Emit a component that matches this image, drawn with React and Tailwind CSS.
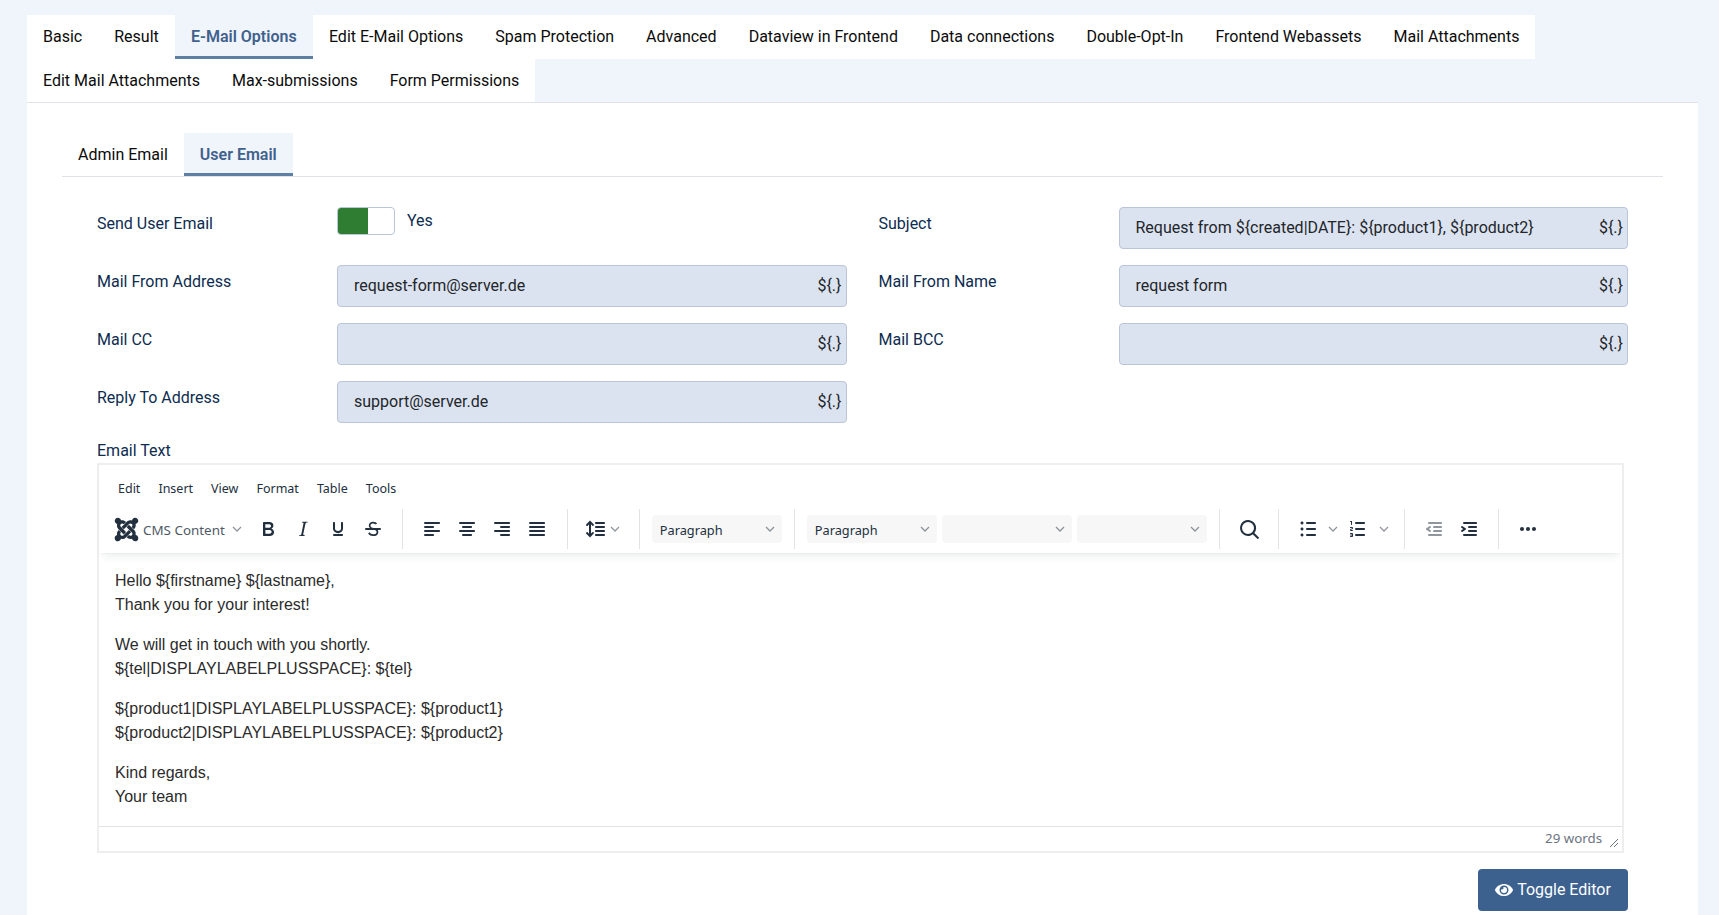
import React from "react";
import { FaJoomla, FaEye } from "react-icons/fa";

const topTabs = [
    "Basic",
    "Result",
    "E-Mail Options",
    "Edit E-Mail Options",
    "Spam Protection",
    "Advanced",
    "Dataview in Frontend",
    "Data connections",
    "Double-Opt-In",
    "Frontend Webassets",
    "Mail Attachments",
    "Edit Mail Attachments",
    "Max-submissions",
    "Form Permissions",
];

const fields = [
    { label: "Mail From Address", value: "request-form@server.de" },
    { label: "Mail From Name", value: "request form" },
    { label: "Mail CC", value: "" },
    { label: "Mail BCC", value: "" },
    { label: "Reply To Address", value: "support@server.de" },
];

const menuItems = ["Edit", "Insert", "View", "Format", "Table", "Tools"];

const ico = {
    bold: "M7.8 19c-.3 0-.5 0-.6-.2l-.2-.5V5.7c0-.2 0-.4.2-.5l.6-.2h5c1.5 0 2.7.3 3.5 1 .7.6 1.1 1.4 1.1 2.5a3 3 0 0 1-.6 1.9c-.4.6-1 1-1.6 1.2.4.1.9.3 1.3.6s.8.7 1 1.2c.4.4.5 1 .5 1.6 0 1.3-.4 2.3-1.3 3-.8.7-2.1 1-3.8 1H7.8zm5-8.3c.6 0 1.2-.1 1.6-.5.4-.3.6-.7.6-1.3 0-1.1-.8-1.7-2.4-1.7H9.3v3.5h3.4zm.5 6c.7 0 1.3-.1 1.7-.4.4-.4.6-.9.6-1.5s-.2-1-.7-1.4c-.4-.3-1-.4-2-.4H9.4v3.8h4z",
    italic: "M16.7 4.7l-.1.9h-.3c-.6 0-1 0-1.4.3-.3.3-.4.6-.5 1.1l-2.1 9.8v.6c0 .5.4.8 1.4.8h.2l-.2.8H8l.2-.8h.2c1.1 0 1.8-.5 2-1.5l2-9.8.1-.5c0-.6-.4-.8-1.4-.8h-.3l.2-.9h5.8z",
    underline: "M16 5c.6 0 1 .4 1 1v5.5a4 4 0 0 1-.4 1.8l-1 1.4a5.3 5.3 0 0 1-5.5 1 5 5 0 0 1-1.6-1c-.5-.4-.8-.9-1.1-1.4a4 4 0 0 1-.4-1.8V6c0-.6.4-1 1-1s1 .4 1 1v5.5c0 .3 0 .6.2 1l.6.7a3.3 3.3 0 0 0 2.2.8 3.4 3.4 0 0 0 2.2-.8c.3-.2.4-.5.6-.8l.2-.9V6c0-.6.4-1 1-1zM8 17h8c.6 0 1 .4 1 1s-.4 1-1 1H8a1 1 0 0 1 0-2z",
    strike: "M15.6 8.5c-.5-.7-1-1.1-1.3-1.3-.6-.4-1.3-.6-2-.6-2.7 0-2.8 1.7-2.8 2.1 0 1.6 1.8 2 3.2 2.3 4.4.9 4.6 2.8 4.6 3.9 0 1.4-.7 4.1-5 4.1A6.2 6.2 0 0 1 7 16.4l1.5-1.1c.4.6 1.6 2 3.7 2 1.6 0 2.5-.4 3-1 .3-.4.4-.9.4-1.3 0-.8-.4-2-4-2.8-3.6-.8-3.8-3-3.8-3.4 0-.8.3-1.9 1-2.7a4.7 4.7 0 0 1 3.4-1.3c1.8 0 3 .8 3.9 1.8l-1.5 1zM5 11h14a1 1 0 0 1 0 2H5a1 1 0 0 1 0-2z",
    alignLeft: "M5 5h14c.6 0 1 .4 1 1s-.4 1-1 1H5a1 1 0 1 1 0-2zm0 4h8c.6 0 1 .4 1 1s-.4 1-1 1H5a1 1 0 1 1 0-2zm0 8h8c.6 0 1 .4 1 1s-.4 1-1 1H5a1 1 0 0 1 0-2zm0-4h14c.6 0 1 .4 1 1s-.4 1-1 1H5a1 1 0 0 1 0-2z",
    alignCenter: "M5 5h14c.6 0 1 .4 1 1s-.4 1-1 1H5a1 1 0 1 1 0-2zm3 4h8c.6 0 1 .4 1 1s-.4 1-1 1H8a1 1 0 1 1 0-2zm0 8h8c.6 0 1 .4 1 1s-.4 1-1 1H8a1 1 0 0 1 0-2zm-3-4h14c.6 0 1 .4 1 1s-.4 1-1 1H5a1 1 0 0 1 0-2z",
    alignRight: "M5 5h14c.6 0 1 .4 1 1s-.4 1-1 1H5a1 1 0 1 1 0-2zm6 4h8c.6 0 1 .4 1 1s-.4 1-1 1h-8a1 1 0 0 1 0-2zm0 8h8c.6 0 1 .4 1 1s-.4 1-1 1h-8a1 1 0 0 1 0-2zm-6-4h14c.6 0 1 .4 1 1s-.4 1-1 1H5a1 1 0 0 1 0-2z",
    justify: "M5 5h14c.6 0 1 .4 1 1s-.4 1-1 1H5a1 1 0 1 1 0-2zm0 4h14c.6 0 1 .4 1 1s-.4 1-1 1H5a1 1 0 1 1 0-2zm0 4h14c.6 0 1 .4 1 1s-.4 1-1 1H5a1 1 0 0 1 0-2zm0 4h14c.6 0 1 .4 1 1s-.4 1-1 1H5a1 1 0 0 1 0-2z",
    lineHeight: "M21 5a1 1 0 0 1 .1 2H13a1 1 0 0 1-.1-2H21zm0 4a1 1 0 0 1 .1 2H13a1 1 0 0 1-.1-2H21zm0 4a1 1 0 0 1 .1 2H13a1 1 0 0 1-.1-2H21zm0 4a1 1 0 0 1 .1 2H13a1 1 0 0 1-.1-2H21zM7 3.6l3.7 3.7a1 1 0 0 1-1.3 1.5h-.1L8 7.3v9.2l1.3-1.3a1 1 0 0 1 1.3 0h.1c.4.4.4 1 0 1.3v.1L7 20.4l-3.7-3.7a1 1 0 0 1 1.3-1.5h.1L6 16.7V7.4L4.7 8.7a1 1 0 0 1-1.3 0h-.1a1 1 0 0 1 0-1.3v-.1L7 3.6z",
    search: "M16 17.3a8 8 0 1 1 1.4-1.4l4.3 4.4a1 1 0 0 1-1.4 1.4l-4.4-4.3zm-5-.3a6 6 0 1 0 0-12 6 6 0 0 0 0 12z",
    bullist: "M11 5h8c.6 0 1 .4 1 1s-.4 1-1 1h-8a1 1 0 0 1 0-2zm0 6h8c.6 0 1 .4 1 1s-.4 1-1 1h-8a1 1 0 0 1 0-2zm0 6h8c.6 0 1 .4 1 1s-.4 1-1 1h-8a1 1 0 0 1 0-2zM4.5 6c0-.4.1-.8.4-1 .3-.4.7-.5 1.1-.5.4 0 .8.1 1 .4.4.3.5.7.5 1.1 0 .4-.1.8-.4 1-.3.4-.7.5-1.1.5-.4 0-.8-.1-1-.4-.4-.3-.5-.7-.5-1.1zm0 6c0-.4.1-.8.4-1 .3-.4.7-.5 1.1-.5.4 0 .8.1 1 .4.4.3.5.7.5 1.1 0 .4-.1.8-.4 1-.3.4-.7.5-1.1.5-.4 0-.8-.1-1-.4-.4-.3-.5-.7-.5-1.1zm0 6c0-.4.1-.8.4-1 .3-.4.7-.5 1.1-.5.4 0 .8.1 1 .4.4.3.5.7.5 1.1 0 .4-.1.8-.4 1-.3.4-.7.5-1.1.5-.4 0-.8-.1-1-.4-.4-.3-.5-.7-.5-1.1z",
    numlist: "M10 17h8c.6 0 1 .4 1 1s-.4 1-1 1h-8a1 1 0 0 1 0-2zm0-6h8c.6 0 1 .4 1 1s-.4 1-1 1h-8a1 1 0 0 1 0-2zm0-6h8c.6 0 1 .4 1 1s-.4 1-1 1h-8a1 1 0 1 1 0-2zM6 4v3.5c0 .3-.2.5-.5.5a.5.5 0 0 1-.5-.5V5h-.5a.5.5 0 0 1 0-1H6zm-1 8.8l.2.2h1.3c.3 0 .5.2.5.5s-.2.5-.5.5H4.9a1 1 0 0 1-.9-1V13c0-.4.3-.8.6-1l1.2-.4.2-.3a.2.2 0 0 0-.2-.2H4.5a.5.5 0 0 1-.5-.5c0-.3.2-.5.5-.5h1.6c.5 0 .9.4.9 1v.1c0 .4-.3.8-.6 1l-1.2.4-.2.3zM7 17v2c0 .6-.4 1-1 1H4.5a.5.5 0 0 1 0-1h1.2c.2 0 .3-.1.3-.3 0-.2-.1-.3-.3-.3H4.4a.4.4 0 1 1 0-.8h1.3c.2 0 .3-.1.3-.3 0-.2-.1-.3-.3-.3H4.5a.5.5 0 1 1 0-1H6c.6 0 1 .4 1 1z",
    outdent: "M7 5h12c.6 0 1 .4 1 1s-.4 1-1 1H7a1 1 0 1 1 0-2zm5 4h7c.6 0 1 .4 1 1s-.4 1-1 1h-7a1 1 0 0 1 0-2zm0 4h7c.6 0 1 .4 1 1s-.4 1-1 1h-7a1 1 0 0 1 0-2zm-5 4h12a1 1 0 0 1 0 2H7a1 1 0 0 1 0-2zm1.6-3.8a1 1 0 0 1-1.2 1.6l-3-2a1 1 0 0 1 0-1.6l3-2a1 1 0 0 1 1.2 1.6L6.8 12l1.8 1.2z",
    indent: "M7 5h12c.6 0 1 .4 1 1s-.4 1-1 1H7a1 1 0 1 1 0-2zm5 4h7c.6 0 1 .4 1 1s-.4 1-1 1h-7a1 1 0 0 1 0-2zm0 4h7c.6 0 1 .4 1 1s-.4 1-1 1h-7a1 1 0 0 1 0-2zm-5 4h12a1 1 0 0 1 0 2H7a1 1 0 0 1 0-2zm-2.6-3.8L6.2 12l-1.8-1.2a1 1 0 0 1 1.2-1.6l3 2a1 1 0 0 1 0 1.6l-3 2a1 1 0 1 1-1.2-1.6z",
    more: "M6 10a2 2 0 0 0-2 2c0 1.1.9 2 2 2a2 2 0 0 0 2-2 2 2 0 0 0-2-2zm12 0a2 2 0 0 0-2 2c0 1.1.9 2 2 2a2 2 0 0 0 2-2 2 2 0 0 0-2-2zm-6 0a2 2 0 0 0-2 2c0 1.1.9 2 2 2a2 2 0 0 0 2-2 2 2 0 0 0-2-2z",
};

const Icon = ({ d, dim }) => (
    <svg width="24" height="24" viewBox="0 0 24 24" className={dim ? "fill-[#222f3e] opacity-50" : "fill-[#222f3e]"}>
        <path d={d} />
    </svg>
);

const Chevron = () => (
    <svg width="10" height="10" viewBox="0 0 10 10" className="fill-none stroke-[#222f3e] opacity-50">
        <path d="M1 3l4 4 4-4" strokeWidth="1.3" />
    </svg>
);

const Btn = ({ d, dim }) => (
    <div className="w-[35px] h-[28px] flex items-center justify-center">
        <Icon d={d} dim={dim} />
    </div>
);

const Sep = () => <div className="w-px h-[40px] bg-[#e3e3e3]" />;

const Select = ({ text, className }) => (
    <div className={`w-[130px] h-[28px] rounded bg-[#f7f7f7] pl-2 pr-[7px] flex items-center justify-between text-[12.75px] text-[#222f3e] ${className}`}>
        <span className="mt-[2px]">{text}</span>
        <Chevron />
    </div>
);

const Field = ({ label, value }) => (
    <div className="grid grid-cols-[240px_1fr]">
        <label className="pt-[5px] text-[#0d2c50]">{label}</label>
        <div className="h-[42px] rounded border border-[#b9c5d8] bg-[#dce3f0] pl-4 pr-1 flex items-center justify-between text-[#22262a]">
            <span>{value}</span>
            <span>{"${.}"}</span>
        </div>
    </div>
);

export default function App() {
    return (
        <div className="h-[915px] overflow-hidden bg-[#f0f4fb] pt-[15px] pl-[27px] pr-[21px] flex flex-col font-['Roboto',sans-serif] text-base leading-6">

            {/* Top tabs */}
            <div className="flex flex-wrap">
                {topTabs.map((tab) => (
                    <div
                        key={tab}
                        className={
                            tab === "E-Mail Options"
                                ? "h-[43.5px] px-[16.3px] pt-[10px] bg-[#f0f4fb] border-b-[3px] border-[#5f7ea3] text-[#3f618c] font-semibold"
                                : "h-[43.5px] px-4 pt-[10px] bg-white text-[#0b0b0b]"
                        }
                    >
                        {tab}
                    </div>
                ))}
            </div>

            <div className="flex-1 bg-white border-t border-[#dfe3e7] px-[35px] pt-[30px]">

                {/* Inner tabs */}
                <div className="flex border-b border-[#dfe3e7]">
                    <div className="h-[43px] px-4 pt-[10px] text-[#0b0b0b]">Admin Email</div>
                    <div className="h-[43px] px-4 pt-[10px] bg-[#f0f4fb] border-b-[3px] border-[#5f7ea3] text-[#3f618c] font-semibold">User Email</div>
                </div>

                <div className="pl-[35px] pr-[35px] pt-[30px]">
                    <div className="grid grid-cols-2 gap-x-[32px] gap-y-4">
                        <div className="grid grid-cols-[240px_1fr]">
                            <label className="pt-[5px] text-[#0d2c50]">Send User Email</label>
                            <div className="flex items-start gap-3">
                                <div className="w-[58px] h-[28px] rounded border border-[#b9c5d8] bg-white overflow-hidden">
                                    <div className="w-[30px] h-full bg-[#2f7d32]" />
                                </div>
                                <span className="text-[#0d2c50] leading-[28px]">Yes</span>
                            </div>
                        </div>
                        <Field label="Subject" value="Request from ${created|DATE}: ${product1}, ${product2}" />
                        {fields.map((f) => (
                            <Field key={f.label} label={f.label} value={f.value} />
                        ))}
                    </div>

                    <div className="mt-4 text-[#0d2c50]">Email Text</div>

                    {/* Editor */}
                    <div className="w-[1527px] h-[390px] border-2 border-[#eeeeee] flex flex-col font-['Noto_Sans',sans-serif]">
                        <div className="shadow-[0_2px_2px_-2px_rgba(34,47,62,0.1),0_8px_8px_-4px_rgba(34,47,62,0.07)] h-[88px] shrink-0">
                            <div className="flex h-[43px] pl-[19px] gap-[18px] items-center pt-[5px] text-[12.5px] text-[#222f3e]">
                                {menuItems.map((m) => (
                                    <span key={m}>{m}</span>
                                ))}
                            </div>
                            <div className="flex items-center h-[42px] pl-[14px]">
                                <FaJoomla className="w-[27px] h-[27px] text-[#222f3e]" />
                                <span className="ml-[3px] mt-[1px] text-[13.4px] text-[#222f3e] opacity-80">CMS Content</span>
                                <div className="ml-[7px] mr-[9px]"><Chevron /></div>
                                <Btn d={ico.bold} />
                                <Btn d={ico.italic} />
                                <Btn d={ico.underline} />
                                <Btn d={ico.strike} />
                                <div className="w-[11px]" />
                                <Sep />
                                <div className="w-[12px]" />
                                <Btn d={ico.alignLeft} />
                                <Btn d={ico.alignCenter} />
                                <Btn d={ico.alignRight} />
                                <Btn d={ico.justify} />
                                <div className="w-[12px]" />
                                <Sep />
                                <div className="w-[15px]" />
                                <Icon d={ico.lineHeight} />
                                <div className="ml-[3px] mr-[19px]"><Chevron /></div>
                                <Sep />
                                <Select text="Paragraph" className="ml-[12px] mr-[12px]" />
                                <Sep />
                                <Select text="Paragraph" className="ml-[12px]" />
                                <Select text="" className="ml-[5px]" />
                                <Select text="" className="ml-[5px] mr-[12px]" />
                                <Sep />
                                <div className="ml-[12px] mr-[11px]"><Btn d={ico.search} /></div>
                                <Sep />
                                <div className="w-[17px]" />
                                <Icon d={ico.bullist} />
                                <div className="ml-[8px] mr-[8px]"><Chevron /></div>
                                <Icon d={ico.numlist} />
                                <div className="ml-[9px] mr-[15px]"><Chevron /></div>
                                <Sep />
                                <div className="w-[12px]" />
                                <Btn d={ico.outdent} dim />
                                <Btn d={ico.indent} />
                                <div className="w-[11px]" />
                                <Sep />
                                <div className="w-[12px]" />
                                <Btn d={ico.more} />
                            </div>
                        </div>

                        <div className="flex-1 pt-[16px] pl-[16px] font-['Liberation_Sans',sans-serif] text-[16px] leading-[24px] text-[#2b2b2b]">
                            <p>Hello {"${firstname}"} {"${lastname}"},<br />Thank you for your interest!</p>
                            <p className="mt-4">We will get in touch with you shortly.<br />{"${tel|DISPLAYLABELPLUSSPACE}"}: {"${tel}"}</p>
                            <p className="mt-4">{"${product1|DISPLAYLABELPLUSSPACE}"}: {"${product1}"}<br />{"${product2|DISPLAYLABELPLUSSPACE}"}: {"${product2}"}</p>
                            <p className="mt-4">Kind regards,<br />Your team</p>
                        </div>

                        <div className="h-[25px] shrink-0 border-t border-[#e3e3e3] flex items-center justify-end pr-[20px] pb-[2px] text-[13.3px] text-[#6b7480] relative">
                            29 words
                            <svg width="10" height="10" viewBox="0 0 10 10" className="absolute right-[3px] bottom-[3px] stroke-[#6b7480] fill-none">
                                <path d="M1 9l8-8M5 9l4-4" strokeWidth="1" />
                            </svg>
                        </div>
                    </div>

                    <div className="flex justify-end mt-[16px]">
                        <button className="w-[150px] h-[42px] rounded bg-[#3d618f] text-white flex items-center justify-center gap-[4px]">
                            <FaEye className="w-[18px] h-[18px]" />
                            Toggle Editor
                        </button>
                    </div>
                </div>
            </div>
        </div>
    );
}
